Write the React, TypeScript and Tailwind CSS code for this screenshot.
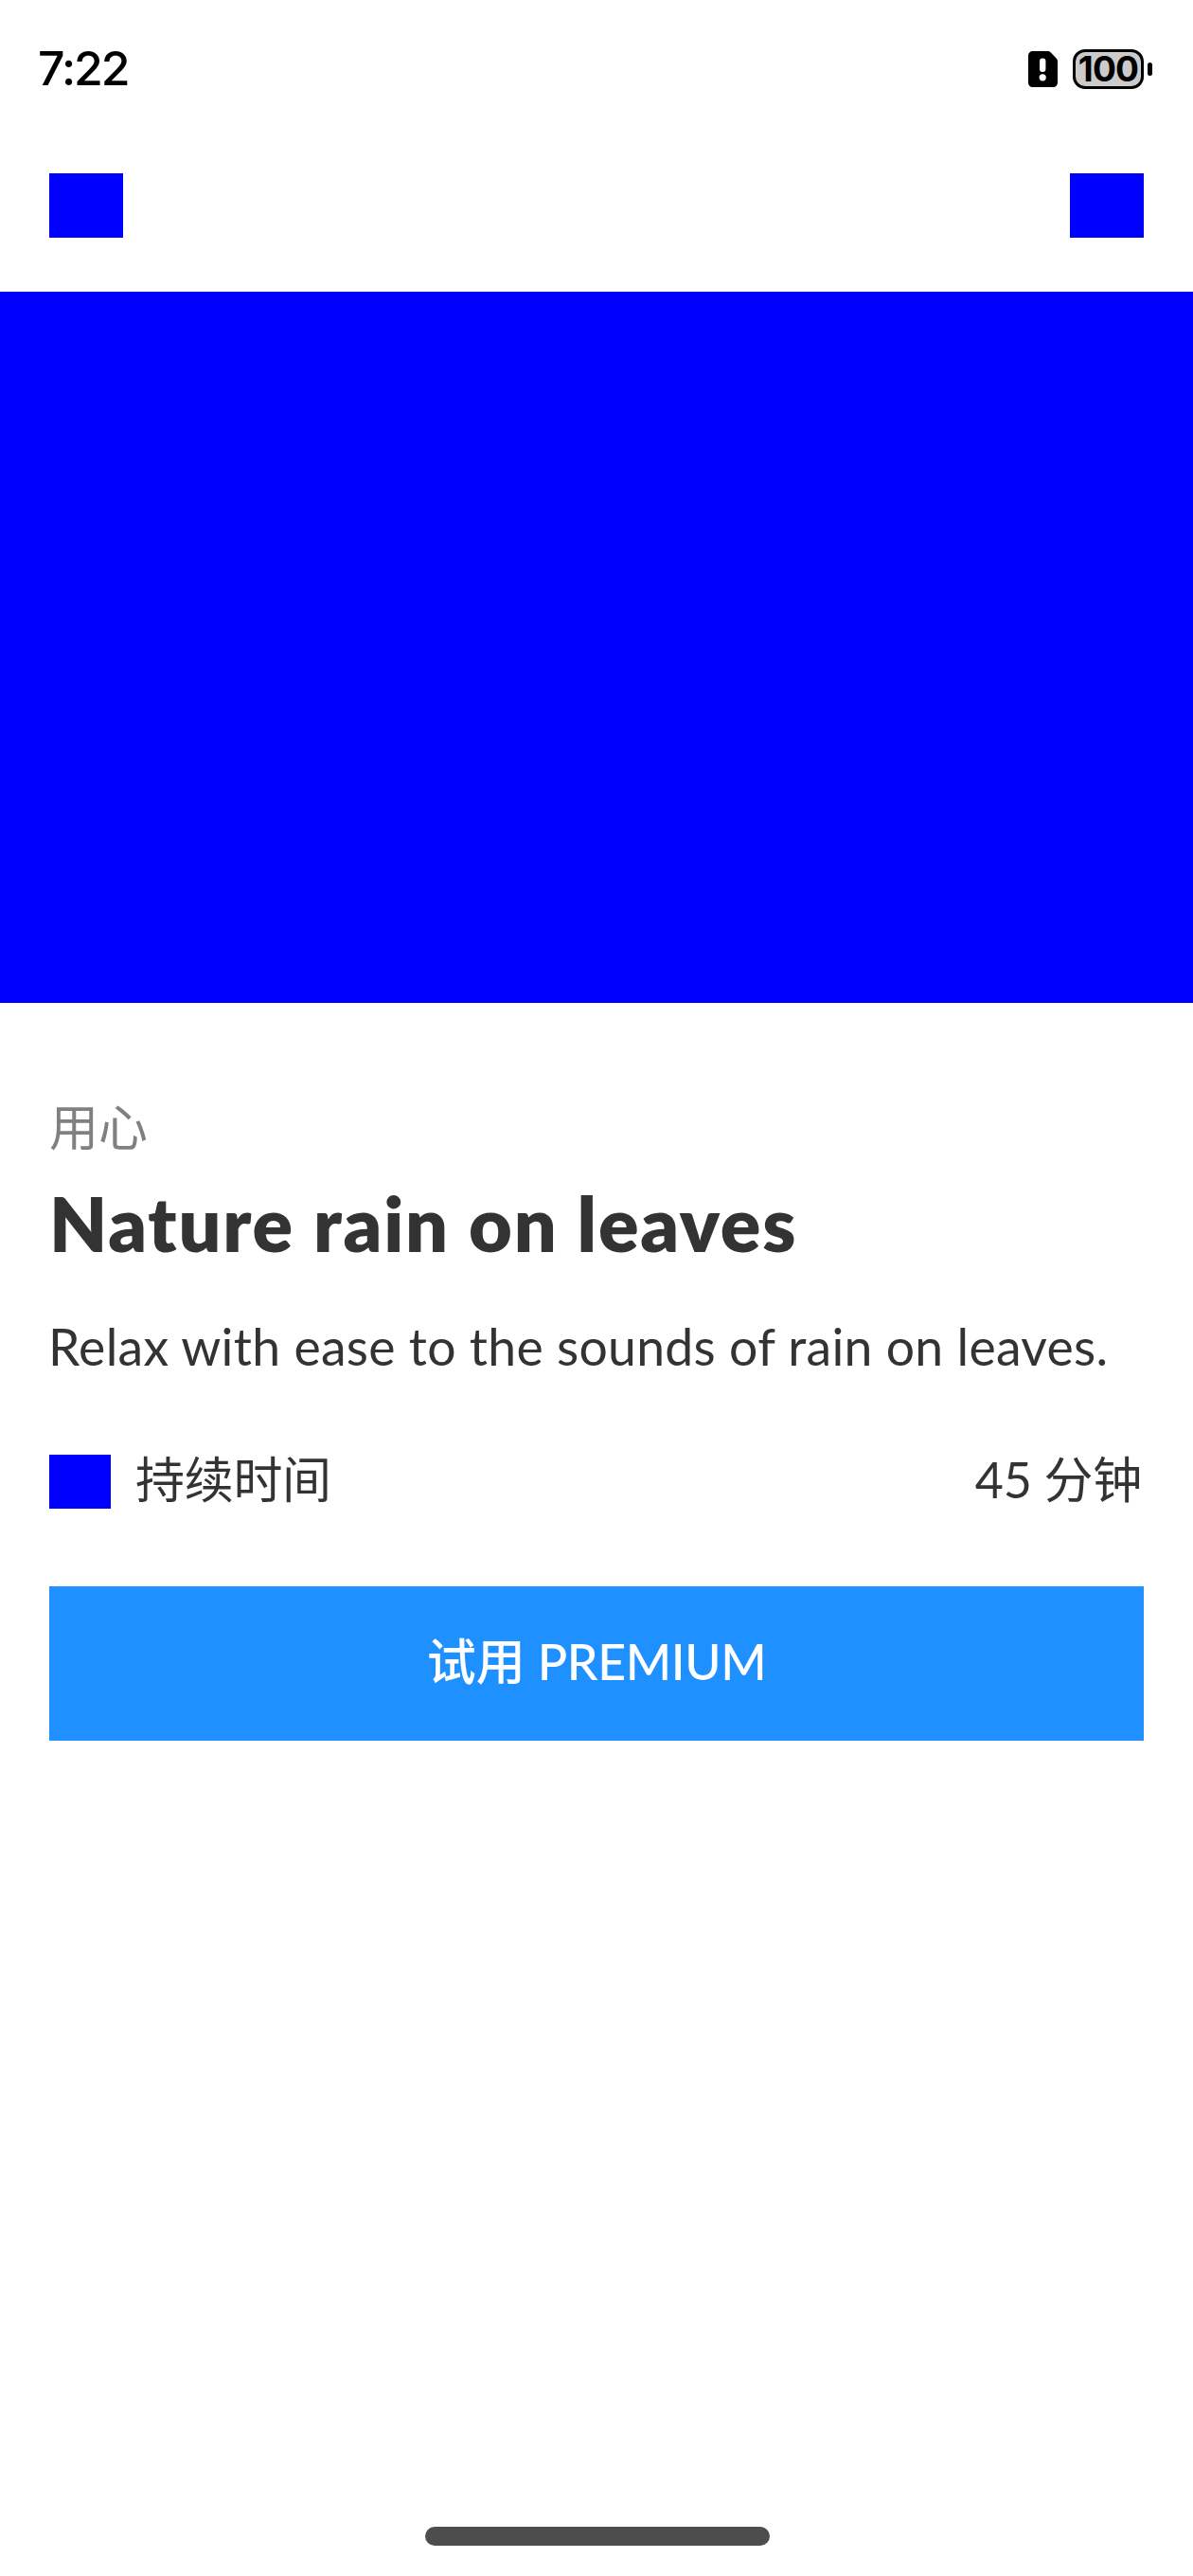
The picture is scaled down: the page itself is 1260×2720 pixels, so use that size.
function SimAlertIcon() {
  return (
    <svg className="h-[38px] w-[31px]" viewBox="0 0 31 38" fill="none">
      <path d="M5 0H20.5C21.8 0 22.7.4 23.6 1.3L29.6 7.6C30.5 8.5 31 9.4 31 10.7V33C31 36 29 38 26 38H5C2 38 0 36 0 33V5C0 2 2 0 5 0Z" fill="#000" />
      <rect x="12" y="7.5" width="6.4" height="14.5" rx="3" fill="#fff" />
      <circle cx="15.2" cy="27.8" r="3.6" fill="#fff" />
    </svg>
  );
}

function Battery() {
  return (
    <div className="flex items-center gap-1">
      <div className="flex h-[42px] w-[75px] items-center justify-center rounded-[13px] border-3 border-black bg-[#cbcbcb] pb-px font-['Inter',sans-serif] text-[37px] leading-none font-bold tracking-[-0.8px] text-black">
        100
      </div>
      <div className="h-[14px] w-[5px] rounded-full bg-black" />
    </div>
  );
}

export default function App() {
  return (
    <div className="flex h-[2720px] w-[1260px] flex-col overflow-hidden bg-white font-['Lato','Noto_Sans_CJK_SC',sans-serif] text-[#333333]">
      <header className="flex h-[145px] items-center justify-between pr-[43px] pl-10">
        <span className="pb-px font-['Inter',sans-serif] text-[50px] leading-none font-medium tracking-[-2px] text-black">7:22</span>
        <div className="flex items-center gap-4">
          <SimAlertIcon />
          <Battery />
        </div>
      </header>

      <nav className="flex h-[163px] items-start justify-between px-[52px] pt-[38px]">
        <div className="h-[68px] w-[78px] bg-[#0000ff]" />
        <div className="h-[68px] w-[78px] bg-[#0000ff]" />
      </nav>

      <div className="h-[751px] w-full bg-[#0000ff]" />

      <main className="flex flex-col px-[52px] pt-24">
        <p className="text-[52px] leading-[70px] text-[#808080]">用心</p>
        <h1 className="mt-[17px] text-[79px] leading-[100px] font-extrabold tracking-[1.8px] whitespace-nowrap">Nature rain on leaves</h1>
        <p className="mt-11 -ml-px text-[53.5px] leading-[70px] tracking-[0.3px] whitespace-nowrap">
          Relax with ease to the sounds of rain on leaves.
        </p>

        <div className="mt-[70px] flex h-[77px] items-center">
          <div className="h-[57px] w-[65px] bg-[#0000ff]" />
          <span className="mb-1.5 ml-[26px] text-[52px] leading-[70px] tracking-[-0.3px]">持续时间</span>
          <span className="mr-0.5 mb-1.5 ml-auto text-[52px] leading-[70px] tracking-[-0.3px]">45 分钟</span>
        </div>

        <button className="mt-[72px] flex h-[163px] w-full items-center justify-center bg-[#1e90ff] pb-1.5 text-[52px] leading-[70px] font-medium text-white">
          试用<span className="ml-[13px] tracking-[-0.4px]">PREMIUM</span>
        </button>
      </main>

      <div className="mt-auto mb-8 ml-[449px] h-5 w-[364px] rounded-full bg-[#4d4d4d]" />
    </div>
  );
}
